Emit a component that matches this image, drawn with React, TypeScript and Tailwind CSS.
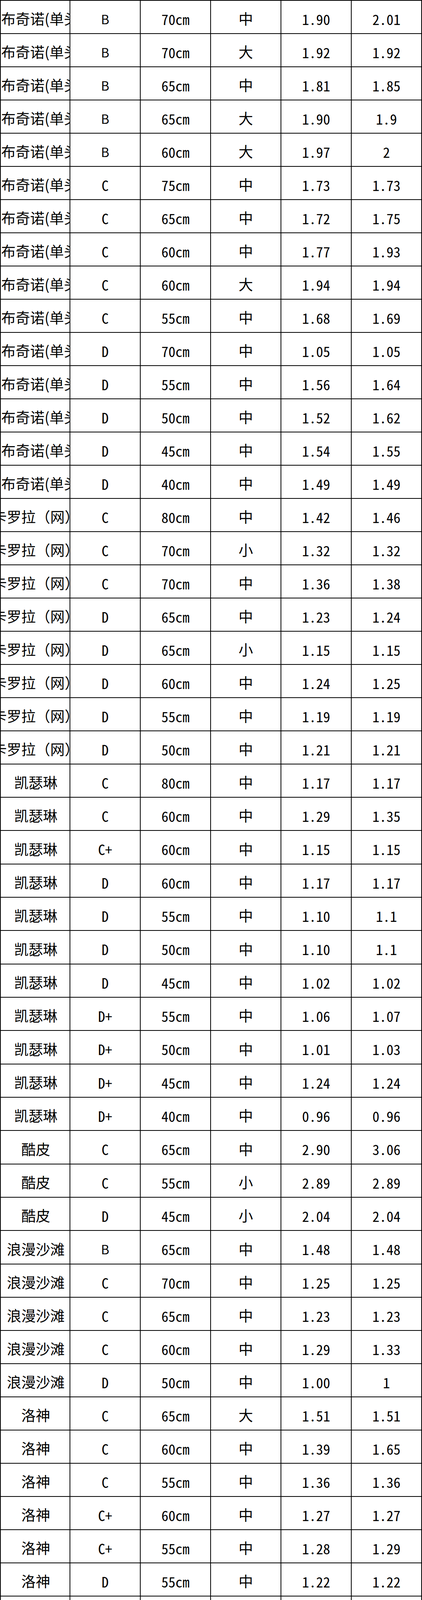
import React from "react";

type Row = [string, string, string, string, string, string];

const BN = "布奇诺(单头)";
const KL = "卡罗拉（网）";
const KS = "凯瑟琳";
const LM = "浪漫沙滩";
const LS = "洛神";
const MT = "曼塔";

const rows: Row[] = [
  [BN, "B", "70cm", "中", "1.90", "2.01"],
  [BN, "B", "70cm", "大", "1.92", "1.92"],
  [BN, "B", "65cm", "中", "1.81", "1.85"],
  [BN, "B", "65cm", "大", "1.90", "1.9"],
  [BN, "B", "60cm", "大", "1.97", "2"],
  [BN, "C", "75cm", "中", "1.73", "1.73"],
  [BN, "C", "65cm", "中", "1.72", "1.75"],
  [BN, "C", "60cm", "中", "1.77", "1.93"],
  [BN, "C", "60cm", "大", "1.94", "1.94"],
  [BN, "C", "55cm", "中", "1.68", "1.69"],
  [BN, "D", "70cm", "中", "1.05", "1.05"],
  [BN, "D", "55cm", "中", "1.56", "1.64"],
  [BN, "D", "50cm", "中", "1.52", "1.62"],
  [BN, "D", "45cm", "中", "1.54", "1.55"],
  [BN, "D", "40cm", "中", "1.49", "1.49"],
  [KL, "C", "80cm", "中", "1.42", "1.46"],
  [KL, "C", "70cm", "小", "1.32", "1.32"],
  [KL, "C", "70cm", "中", "1.36", "1.38"],
  [KL, "D", "65cm", "中", "1.23", "1.24"],
  [KL, "D", "65cm", "小", "1.15", "1.15"],
  [KL, "D", "60cm", "中", "1.24", "1.25"],
  [KL, "D", "55cm", "中", "1.19", "1.19"],
  [KL, "D", "50cm", "中", "1.21", "1.21"],
  [KS, "C", "80cm", "中", "1.17", "1.17"],
  [KS, "C", "60cm", "中", "1.29", "1.35"],
  [KS, "C+", "60cm", "中", "1.15", "1.15"],
  [KS, "D", "60cm", "中", "1.17", "1.17"],
  [KS, "D", "55cm", "中", "1.10", "1.1"],
  [KS, "D", "50cm", "中", "1.10", "1.1"],
  [KS, "D", "45cm", "中", "1.02", "1.02"],
  [KS, "D+", "55cm", "中", "1.06", "1.07"],
  [KS, "D+", "50cm", "中", "1.01", "1.03"],
  [KS, "D+", "45cm", "中", "1.24", "1.24"],
  [KS, "D+", "40cm", "中", "0.96", "0.96"],
  ["酷皮", "C", "65cm", "中", "2.90", "3.06"],
  ["酷皮", "C", "55cm", "小", "2.89", "2.89"],
  ["酷皮", "D", "45cm", "小", "2.04", "2.04"],
  [LM, "B", "65cm", "中", "1.48", "1.48"],
  [LM, "C", "70cm", "中", "1.25", "1.25"],
  [LM, "C", "65cm", "中", "1.23", "1.23"],
  [LM, "C", "60cm", "中", "1.29", "1.33"],
  [LM, "D", "50cm", "中", "1.00", "1"],
  [LS, "C", "65cm", "大", "1.51", "1.51"],
  [LS, "C", "60cm", "中", "1.39", "1.65"],
  [LS, "C", "55cm", "中", "1.36", "1.36"],
  [LS, "C+", "60cm", "中", "1.27", "1.27"],
  [LS, "C+", "55cm", "中", "1.28", "1.29"],
  [LS, "D", "55cm", "中", "1.22", "1.22"],
  [LS, "D", "50cm", "中", "1.16", "1.16"],
  [LS, "D+", "55cm", "中", "1.14", "1.14"],
  [LS, "D+", "50cm", "中", "1.16", "1.18"],
  [LS, "D+", "45cm", "中", "1.16", "1.16"],
  [MT, "B", "70cm", "中", "1.92", "1.92"],
  [MT, "B", "65cm", "大", "1.82", "1.82"],
  [MT, "C", "70cm", "中", "1.76", "1.76"],
  [MT, "C", "65cm", "中", "1.66", "1.67"],
  [MT, "C", "60cm", "中", "1.73", "1.79"],
  [MT, "C", "60cm", "大", "1.70", "1.7"],
  [MT, "D", "55cm", "中", "1.62", "1.66"],
  [MT, "D", "50cm", "中", "1.57", "1.61"],
  [MT, "D", "40cm", "中", "1.39", "1.39"],
  ["美杜莎", "D", "50cm", "中", "0.53", "0.53"],
  ["米奇", "A", "75cm", "大", "2.50", "2.5"],
  ["蜜桃雪山", "B", "70cm", "大", "1.04", "1.1"],
  ["蜜桃雪山", "B", "70cm", "中", "1.01", "1.01"],
  ["蜜桃雪山", "B+", "65cm", "中", "1.11", "1.12"],
];

const tallRows = new Set([26, 29, 32, 35, 38, 55]);

const cjk = "font-['Noto_Sans_CJK_SC','Noto_Sans',sans-serif]";
const half = "[font-feature-settings:'hwid']";

function Cell({
  children,
  first,
  className,
}: {
  children: React.ReactNode;
  first?: boolean;
  className?: string;
}) {
  return (
    <div
      className={
        "w-[180px] shrink-0 h-full border-r-2 border-black overflow-hidden flex items-center whitespace-nowrap pt-[8px] leading-none " +
        (first ? "border-l-2 " : "") +
        (className ?? "justify-center")
      }
    >
      {children}
    </div>
  );
}

export default function App() {
  return (
    <div className={"w-[1080px] bg-white text-black border-t-2 border-black " + cjk}>
      {rows.map((r, i) => {
        const idx = i + 1;
        const isBN = r[0] === BN;
        const propGrade = r[1].startsWith("B") || r[1] === "A";
        return (
          <div
            key={i}
            className={
              "flex border-b-2 border-black " + (tallRows.has(idx) ? "h-[86px]" : "h-[85px]")
            }
          >
            <Cell first className={isBN ? "justify-start pl-[1px]" : "justify-center pl-[3px]"}>
              <span className="text-[37px]">{r[0]}</span>
            </Cell>
            <Cell>
              {propGrade ? (
                <span className="text-[32px]">{r[1]}</span>
              ) : (
                <span className={"text-[36px] " + half}>{r[1]}</span>
              )}
            </Cell>
            <Cell>
              <span className={"text-[36px] " + half}>{r[2]}</span>
            </Cell>
            <Cell>
              <span className="text-[37px]">{r[3]}</span>
            </Cell>
            <Cell>
              <span className={"text-[36px] " + half}>{r[4]}</span>
            </Cell>
            <Cell>
              <span className={"text-[36px] " + half}>{r[5]}</span>
            </Cell>
          </div>
        );
      })}
    </div>
  );
}
